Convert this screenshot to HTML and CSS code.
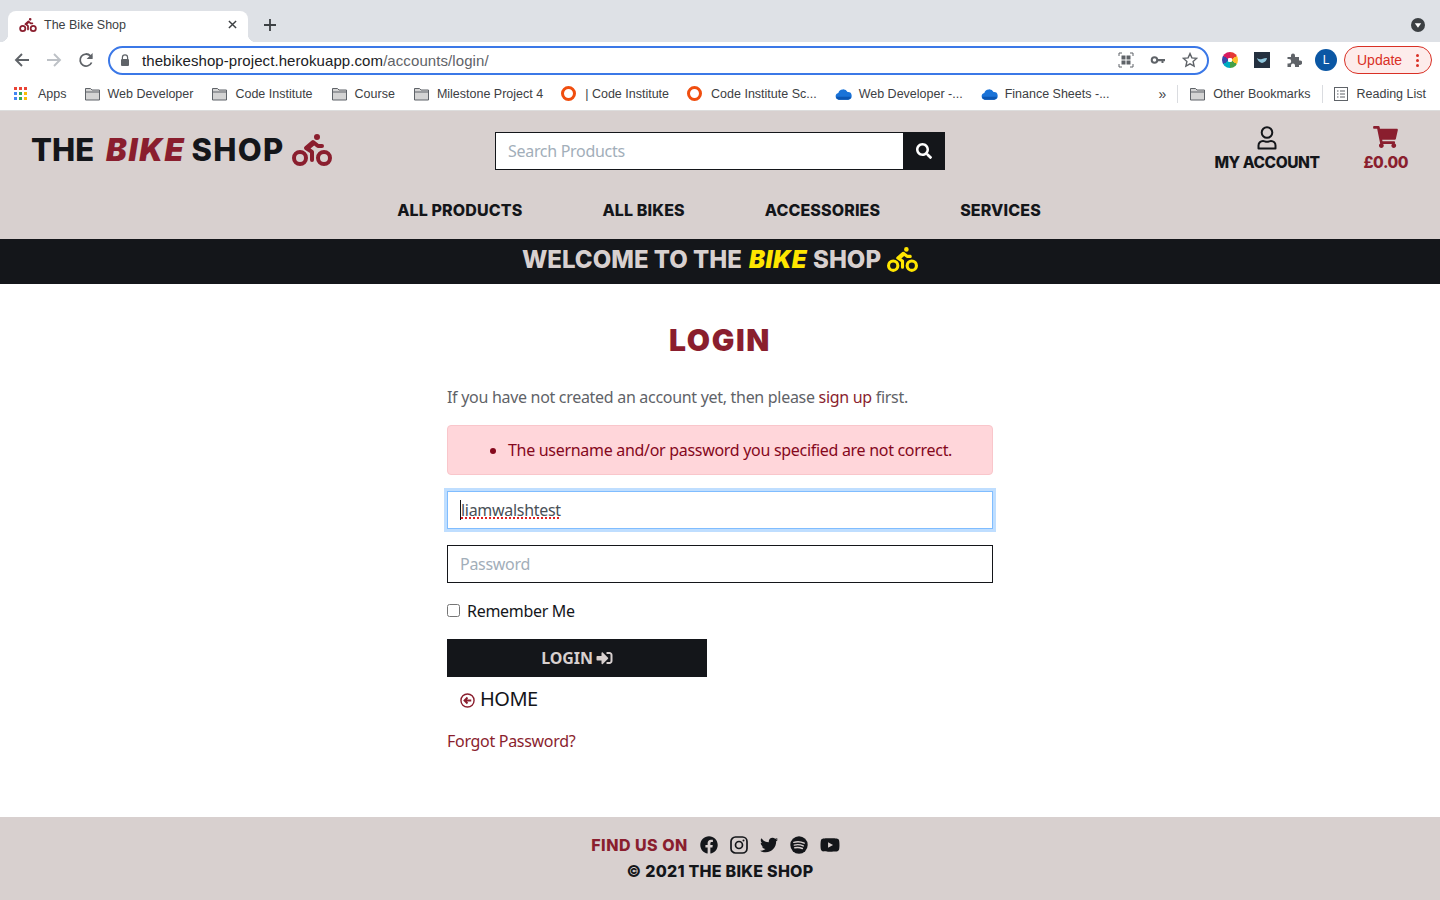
FILE: index.html
```html
<!DOCTYPE html>
<html lang="en">
<head>
<meta charset="utf-8">
<title>The Bike Shop</title>
<link rel="stylesheet" href="styles.css">
</head>
<body>
<svg class="defs" aria-hidden="true">
  <symbol id="bike" viewBox="0 0 640 512"><path d="M400 96a48 48 0 1 0-48-48 48 48 0 0 0 48 48zm-4 121a31.9 31.9 0 0 0 20 7h64a32 32 0 0 0 0-64h-52.78L356 103a31.94 31.94 0 0 0-40.81.68l-112 96a32 32 0 0 0 3.08 50.92L288 305.12V416a32 32 0 0 0 64 0V288a32 32 0 0 0-14.25-26.62l-41.36-27.57 58.25-49.92zm116 39a128 128 0 1 0 128 128 128 128 0 0 0-128-128zm0 192a64 64 0 1 1 64-64 64 64 0 0 1-64 64zM128 256a128 128 0 1 0 128 128 128 128 0 0 0-128-128zm0 192a64 64 0 1 1 64-64 64 64 0 0 1-64 64z"/></symbol>
  <symbol id="folder" viewBox="0 0 16 14"><path d="M1 3V1.500h5L7.500 3H15v10H1zM1 5h14" fill="#d4d4d4" stroke="#5f6368" stroke-width="1"/></symbol>
  <symbol id="cloud" viewBox="0 0 18 12"><path d="M4 12a3.600 3.600 0 0 1-.5-7.100A5.300 5.300 0 0 1 13.300 4 4 4 0 0 1 14 12z" fill="#1a73d8"/><path d="M1 9h16v0a3.500 3.500 0 0 1-3 3H4a3.500 3.500 0 0 1-3-3z" fill="#0b56b3"/></symbol>
</svg>

<div class="browser">
  <div class="tabstrip">
    <div class="tab">
      <svg class="fav" fill="#8a1e2e"><use href="#bike"/></svg>
      <span class="tab-title">The Bike Shop</span>
      <svg class="tab-x" viewBox="0 0 10 10"><path d="M1 1l8 8M9 1L1 9" stroke="#3c4043" stroke-width="1.600"/></svg>
    </div>
    <svg class="new-tab" viewBox="0 0 12 12"><path d="M6 0v12M0 6h12" stroke="#3c4043" stroke-width="1.800"/></svg>
    <svg class="tab-menu" viewBox="0 0 14 14"><circle cx="7" cy="7" r="7" fill="#3c4043"/><path d="M3.800 5.300h6.400L7 9.800z" fill="#fff"/></svg>
  </div>
  <div class="toolbar">
    <svg class="nav-ic" viewBox="0 0 16 16"><path d="M15 8H2M8 2L2 8l6 6" fill="none" stroke="#5f6368" stroke-width="1.900"/></svg>
    <svg class="nav-ic" viewBox="0 0 16 16"><path d="M1 8h13M8 2l6 6-6 6" fill="none" stroke="#bdc1c6" stroke-width="1.900"/></svg>
    <svg class="nav-ic" viewBox="0 0 16 16"><path d="M13.600 10.500A6 6 0 1 1 12.400 3.800L14 5.500" fill="none" stroke="#5f6368" stroke-width="1.800"/><path d="M14.600 1v6h-6z" fill="#5f6368"/></svg>
    <div class="omnibox">
      <svg class="lock" viewBox="0 0 10 12"><path d="M2.400 5V3.400a2.600 2.600 0 0 1 5.200 0V5" fill="none" stroke="#5f6368" stroke-width="1.200"/><rect x="1" y="5" width="8" height="7" rx="1" fill="#5f6368"/></svg>
      <span class="url"><b>thebikeshop-project.herokuapp.com</b>/accounts/login/</span>
      <svg class="omni-ic" viewBox="0 0 16 16"><path d="M1 4V1h3M12 1h3v3M15 12v3h-3M4 15H1v-3" fill="none" stroke="#5f6368"/><rect x="3.500" y="3.500" width="4" height="4" fill="#5f6368"/><rect x="8.500" y="3.500" width="4" height="4" fill="#5f6368"/><rect x="3.500" y="8.500" width="4" height="4" fill="#5f6368"/><rect x="8.500" y="8.500" width="4" height="4" fill="#5f6368"/></svg>
      <svg class="omni-ic" viewBox="0 0 16 16"><circle cx="4.500" cy="8" r="2.800" fill="none" stroke="#5f6368" stroke-width="2"/><path d="M7 7h8v2.200h-1.500V11h-2V9.200H7z" fill="#5f6368"/></svg>
      <svg class="omni-ic" viewBox="0 0 16 16"><path d="M8 1.600l1.900 4.300 4.700.5-3.500 3.100 1 4.600L8 11.800l-4.100 2.300 1-4.600L1.400 6.400l4.700-.5z" fill="none" stroke="#5f6368" stroke-width="1.400"/></svg>
    </div>
    <div class="tool-right">
      <span class="wheel"></span>
      <svg class="ext" viewBox="0 0 16 16"><rect width="16" height="16" fill="#24303f"/><path d="M3 6q2.500 2 5 1t5-1q-.5 4-5 5-4-1-5-5z" fill="#8fc6dc"/></svg>
      <svg class="ext" viewBox="0 0 16 16"><path d="M1.500 5H5V3.500a2 2 0 0 1 4 0V5h4v3.500h1a2.200 2.200 0 0 1 0 4.400h-1V15H9v-1.500a2 2 0 0 0-4 0V15H1.500v-3.500H3a2.200 2.200 0 0 0 0-4.400H1.500z" fill="#5f6368"/></svg>
      <span class="avatar">L</span>
      <span class="update">Update<span class="dots"><i></i><i></i><i></i></span></span>
    </div>
  </div>
  <div class="bookmarks">
    <span class="bm bm-apps"><span class="apps-grid"><i class="r"></i><i class="r"></i><i class="r"></i><i class="b"></i><i class="g"></i><i class="y"></i><i class="b"></i><i class="g"></i><i class="y"></i></span>Apps</span>
    <span class="bm"><svg class="bm-ic"><use href="#folder"/></svg>Web Developer</span>
    <span class="bm"><svg class="bm-ic"><use href="#folder"/></svg>Code Institute</span>
    <span class="bm"><svg class="bm-ic"><use href="#folder"/></svg>Course</span>
    <span class="bm"><svg class="bm-ic"><use href="#folder"/></svg>Milestone Project 4</span>
    <span class="bm"><span class="ring"></span>| Code Institute</span>
    <span class="bm"><span class="ring"></span>Code Institute Sc...</span>
    <span class="bm"><svg class="bm-ic"><use href="#cloud"/></svg>Web Developer -...</span>
    <span class="bm"><svg class="bm-ic"><use href="#cloud"/></svg>Finance Sheets -...</span>
    <span class="bm-right">
      <span class="more">»</span>
      <span class="sep"></span>
      <span class="bm"><svg class="bm-ic"><use href="#folder"/></svg>Other Bookmarks</span>
      <span class="sep"></span>
      <span class="bm"><svg class="bm-list" viewBox="0 0 14 14"><rect x=".5" y=".5" width="13" height="13" fill="none" stroke="#5f6368"/><path d="M3 4h1.500M6 4h5M3 7h1.500M6 7h5M3 10h1.500M6 10h5" stroke="#5f6368"/></svg>Reading List</span>
    </span>
  </div>
</div>

<div class="site">
  <header class="site-header">
    <div class="head-row">
      <a class="logo"><span class="logo-the">THE</span><em>BIKE</em><span class="logo-shop">SHOP</span><svg class="logo-bike"><use href="#bike"/></svg></a>
      <form class="search">
        <input class="search-input" type="text" placeholder="Search Products">
        <button class="search-btn" type="button"><svg viewBox="0 0 512 512"><path d="M505 442.700L405.300 343c-4.500-4.500-10.600-7-17-7H372c27.600-35.300 44-79.700 44-128C416 93.100 322.900 0 208 0S0 93.100 0 208s93.100 208 208 208c48.300 0 92.700-16.400 128-44v16.300c0 6.400 2.500 12.500 7 17l99.700 99.700c9.400 9.400 24.600 9.400 33.900 0l28.300-28.300c9.400-9.400 9.400-24.600.1-34zM208 336c-70.700 0-128-57.200-128-128 0-70.700 57.200-128 128-128 70.700 0 128 57.200 128 128 0 70.700-57.200 128-128 128z"/></svg></button>
      </form>
      <div class="head-links">
        <a class="head-link">
          <svg class="user-ic" viewBox="0 0 20 24"><circle cx="10" cy="6.500" r="5.300" fill="none" stroke="#14161a" stroke-width="2"/><path d="M1.500 22.500v-3a4.500 4.500 0 0 1 4.500-4.500c1.500 0 2 .8 4 .8s2.500-.8 4-.8a4.500 4.500 0 0 1 4.500 4.500v3z" fill="none" stroke="#14161a" stroke-width="2" stroke-linejoin="round"/></svg>
          <span>MY ACCOUNT</span>
        </a>
        <a class="head-link cart">
          <svg class="cart-ic" viewBox="0 0 576 512"><path d="M528.120 301.319l47.273-208C578.806 78.301 567.391 64 551.990 64H159.208l-9.166-44.810C147.758 8.021 137.930 0 126.529 0H24C10.745 0 0 10.745 0 24v16c0 13.255 10.745 24 24 24h69.883l70.248 343.435C147.325 417.100 136 435.222 136 456c0 30.928 25.072 56 56 56s56-25.072 56-56c0-15.674-6.447-29.835-16.824-40h209.647C430.447 426.165 424 440.326 424 456c0 30.928 25.072 56 56 56s56-25.072 56-56c0-22.172-12.888-41.332-31.579-50.405l5.517-24.276c3.413-15.018-8.002-29.319-23.403-29.319H218.117l-6.545-32h293.145c11.206 0 20.920-7.754 23.403-18.681z"/></svg>
          <span>£0.00</span>
        </a>
      </div>
    </div>
    <nav class="main-nav">
      <a>ALL PRODUCTS</a>
      <a>ALL BIKES</a>
      <a>ACCESSORIES</a>
      <a>SERVICES</a>
    </nav>
    <div class="banner"><span class="ban-lead">WELCOME TO THE</span><em>BIKE</em><span class="ban-shop">SHOP</span><svg class="banner-bike"><use href="#bike"/></svg></div>
  </header>

  <main class="main">
    <div class="login">
      <h1 class="login-title">LOGIN</h1>
      <p class="intro">If you have not created an account yet, then please <a>sign up</a> first.</p>
      <div class="alert"><ul><li>The username and/or password you specified are not correct.</li></ul></div>
      <div class="field field-focus"><span class="typed">liamwalshtest</span></div>
      <input class="field field-pass" type="password" placeholder="Password">
      <label class="remember"><input type="checkbox"><span>Remember Me</span></label>
      <button class="login-btn" type="button">LOGIN <svg viewBox="0 0 512 512"><path d="M416 448h-84c-6.600 0-12-5.400-12-12v-40c0-6.600 5.400-12 12-12h84c17.700 0 32-14.300 32-32V160c0-17.700-14.300-32-32-32h-84c-6.600 0-12-5.400-12-12V76c0-6.600 5.400-12 12-12h84c53 0 96 43 96 96v192c0 53-43 96-96 96zm-47-201L201 79c-15-15-41-4.500-41 17v96H24c-13.300 0-24 10.700-24 24v96c0 13.300 10.700 24 24 24h136v96c0 21.500 26 32 41 17l168-168c9.300-9.400 9.300-24.600 0-34z"/></svg></button>
      <a class="home"><svg viewBox="0 0 16 16"><circle cx="8" cy="8" r="7" fill="none" stroke="#8a1e2e" stroke-width="1.500"/><path d="M12 8H5.500M8 4.800L4.800 8 8 11.200" fill="none" stroke="#8a1e2e" stroke-width="2"/></svg>HOME</a>
      <a class="forgot">Forgot Password?</a>
    </div>
  </main>

  <footer class="footer">
    <div class="find">
      <span class="find-label">FIND US ON</span>
      <svg class="soc" viewBox="0 0 512 512"><path d="M504 256C504 119 393 8 256 8S8 119 8 256c0 123.780 90.690 226.380 209.250 245V327.690h-63V256h63v-54.640c0-62.150 37-96.480 93.670-96.480 27.140 0 55.520 4.840 55.520 4.840v61h-31.280c-30.800 0-40.410 19.120-40.410 38.730V256h68.780l-11 71.690h-57.780V501C413.310 482.380 504 379.780 504 256z"/></svg>
      <svg class="soc" viewBox="0 0 18 18"><rect x="1" y="1" width="16" height="16" rx="4.500" fill="none" stroke="#14161a" stroke-width="1.700"/><circle cx="9" cy="9" r="3.500" fill="none" stroke="#14161a" stroke-width="1.700"/><circle cx="13.500" cy="4.500" r="1" fill="#14161a"/></svg>
      <svg class="soc" viewBox="0 0 512 512"><path d="M459.370 151.716c.325 4.548.325 9.097.325 13.645 0 138.720-105.583 298.558-298.558 298.558-59.452 0-114.680-17.219-161.137-47.106 8.447.974 16.568 1.299 25.340 1.299 49.055 0 94.213-16.568 130.274-44.832-46.132-.975-84.792-31.188-98.112-72.772 6.498.974 12.995 1.624 19.818 1.624 9.421 0 18.843-1.300 27.614-3.573-48.081-9.747-84.143-51.980-84.143-102.985v-1.299c13.969 7.797 30.214 12.670 47.431 13.319-28.264-18.843-46.781-51.005-46.781-87.391 0-19.492 5.197-37.360 14.294-52.954 51.655 63.675 129.300 105.258 216.365 109.807-1.624-7.797-2.599-15.918-2.599-24.040 0-57.828 46.782-104.934 104.934-104.934 30.213 0 57.502 12.670 76.670 33.137 23.715-4.548 46.456-13.320 66.599-25.340-7.798 24.366-24.366 44.833-46.132 57.827 21.117-2.273 41.584-8.122 60.426-16.243-14.292 20.791-32.161 39.308-52.628 54.253z"/></svg>
      <svg class="soc" viewBox="0 0 18 18"><circle cx="9" cy="9" r="8.700" fill="#14161a"/><path d="M3.800 6.300q5.500-1.600 10.400.9M4.300 9.100q4.600-1.200 9 .8M4.800 11.800q3.800-1 7.600.7" fill="none" stroke="#d8d0cf" stroke-width="1.400" stroke-linecap="round"/></svg>
      <svg class="soc soc-yt" viewBox="0 0 576 512"><path d="M549.655 124.083c-6.281-23.650-24.787-42.276-48.284-48.597C458.781 64 288 64 288 64S117.220 64 74.629 75.486c-23.497 6.322-42.003 24.947-48.284 48.597-11.412 42.867-11.412 132.305-11.412 132.305s0 89.438 11.412 132.305c6.281 23.650 24.787 41.500 48.284 47.821C117.220 448 288 448 288 448s170.780 0 213.371-11.486c23.497-6.321 42.003-24.171 48.284-47.821 11.412-42.867 11.412-132.305 11.412-132.305s0-89.438-11.412-132.305zm-317.510 213.508V175.185l142.739 81.205-142.739 81.201z"/></svg>
    </div>
    <div class="copy">© 2021 THE BIKE SHOP</div>
  </footer>
</div>
</body>
</html>
```

FILE: styles.css
```css
* { box-sizing: border-box; }
html, body { height: 100%; }
body {
  margin: 0;
  height: 900px;
  overflow: hidden;
  display: flex;
  flex-direction: column;
  font-family: "Noto Sans", sans-serif;
  color: #14161a;
  background: #fff;
}
.defs { width: 0; height: 0; display: block; }
a { color: inherit; text-decoration: none; }

/* Browser chrome */
.browser { font-family: "Liberation Sans", sans-serif; flex: none; }
.tabstrip {
  height: 42px;
  background: #dee1e6;
  display: flex;
  align-items: flex-end;
  padding-left: 8px;
}
.tab {
  position: relative;
  width: 240px;
  height: 31px;
  background: #fff;
  border-radius: 8px 8px 0 0;
  display: flex;
  align-items: center;
  padding: 0 11px 4px 11px;
  font-size: 12.500px;
  color: #3c4043;
}
.tab::before, .tab::after {
  content: "";
  position: absolute;
  bottom: 0;
  width: 8px;
  height: 8px;
}
.tab::before { right: 100%; background: radial-gradient(circle at 0 0, transparent 8px, #fff 8.500px); }
.tab::after { left: 100%; background: radial-gradient(circle at 100% 0, transparent 8px, #fff 8.500px); }
.fav { width: 18px; height: 14px; margin-right: 7px; }
.tab-title { flex: 1; }
.tab-x { width: 9px; height: 9px; }
.new-tab { width: 12px; height: 12px; margin: 0 0 11px 16px; }
.tab-menu { width: 14px; height: 14px; margin: 0 15px 10px auto; }

.toolbar {
  height: 42px;
  background: #fff;
  display: flex;
  align-items: center;
  padding: 0 0 6px 14px;
}
.nav-ic { width: 16px; height: 16px; margin-right: 16px; }
.omnibox {
  margin-left: -2px;
  width: 1101px;
  height: 29px;
  border: 2px solid #3b78e7;
  border-radius: 15px;
  display: flex;
  align-items: center;
  padding: 0 9px 0 10px;
  gap: 16px;
}
.lock { width: 10px; height: 12px; flex: none; }
.url { flex: 1; margin-left: -4px; font-size: 15px; color: #5f6368; letter-spacing: .08px; }
.url b { font-weight: 400; color: #202124; }
.omni-ic { width: 16px; height: 16px; flex: none; }
.tool-right { display: flex; align-items: center; margin-left: 13px; gap: 16px; }
.wheel {
  width: 16px;
  height: 16px;
  border-radius: 50%;
  background:
    radial-gradient(circle, #fff 0 2px, transparent 2.500px),
    conic-gradient(#e53935 0 60deg, #fbc02d 0 120deg, #43a047 0 180deg, #00acc1 0 240deg, #3949ab 0 300deg, #d81b60 0);
}
.ext { width: 16px; height: 16px; }
.avatar {
  width: 22px;
  height: 22px;
  margin-left: -3px;
  border-radius: 50%;
  background: #0b57a4;
  color: #fff;
  font-size: 12px;
  display: flex;
  align-items: center;
  justify-content: center;
}
.update {
  margin-left: -9px;
  width: 88px;
  height: 28px;
  border: 1px solid #d93025;
  border-radius: 14px;
  background: #fdeceb;
  color: #d93025;
  font-size: 14px;
  display: flex;
  align-items: center;
  padding-left: 12px;
}
.dots { display: flex; flex-direction: column; gap: 2px; margin-left: 14px; }
.dots i { width: 3px; height: 3px; border-radius: 50%; background: #d93025; }

.bookmarks {
  height: 26px;
  background: #fff;
  display: flex;
  align-items: center;
  padding: 0 14px 7px 14px;
  font-size: 12.500px;
  color: #3c4043;
  gap: 18px;
  white-space: nowrap;
}
.bm { display: flex; align-items: center; }
.bm-apps { margin-right: -1px; }
.bm-ic { width: 17px; height: 14px; margin-right: 7px; }
.bm-list { width: 14px; height: 14px; margin-right: 9px; }
.apps-grid {
  width: 14px;
  display: grid;
  grid-template-columns: repeat(3, 3px);
  gap: 2px;
  margin-right: 10px;
}
.apps-grid i { height: 3px; }
.apps-grid .r { background: #ea4335; }
.apps-grid .b { background: #4285f4; }
.apps-grid .g { background: #34a853; }
.apps-grid .y { background: #fbbc04; }
.ring {
  width: 15px;
  height: 15px;
  border: 3.500px solid #f04e0f;
  border-radius: 50%;
  margin-right: 9px;
}
.bm-right { margin-left: auto; display: flex; align-items: center; gap: 11px; }
.more { font-size: 14px; }
.sep { width: 1px; height: 18px; background: #dadce0; }

/* Site */
.site { flex: 1; display: flex; flex-direction: column; min-height: 0; letter-spacing: -.3px; }
.site-header { background: #d8d0cf; border-top: 1px solid #ddd; }
.head-row {
  display: grid;
  grid-template-columns: 1fr 450px 1fr;
  align-items: start;
  padding: 21px 31px 0;
  height: 81px;
}
.logo {
  font-family: Inter, sans-serif;
  font-weight: 800;
  font-size: 31px;
  line-height: 36px;
  letter-spacing: 0;
  white-space: nowrap;
  display: flex;
  align-items: center;
}
.logo em, .banner em { font-style: italic; font-weight: 900; }
.logo-the { margin-right: 12px; }
.logo em { color: #8a1e2e; letter-spacing: 1.700px; margin-right: 6px; }
.logo-shop { letter-spacing: 1.300px; margin-right: 7px; }
.logo-bike { width: 40px; height: 32px; fill: #8a1e2e; }
.search { display: flex; height: 38px; }
.search-input {
  flex: 1;
  min-width: 0;
  border: 1px solid #14161a;
  border-right: 0;
  padding: 0 12px;
  font: 16px "Noto Sans", sans-serif;
  letter-spacing: -.3px;
  background: #fff;
  outline: 0;
}
.search-input::placeholder, .field-pass::placeholder { color: #a2aeb9; opacity: 1; }
.search-btn {
  width: 42px;
  background: #14161a;
  border: 0;
  padding: 0;
  display: flex;
  align-items: center;
  justify-content: center;
}
.search-btn svg { width: 16px; height: 16px; fill: #fff; }
.head-links { display: flex; justify-content: flex-end; gap: 44px; margin-top: -6px; padding-right: 1px; }
.head-link {
  display: flex;
  flex-direction: column;
  align-items: center;
  font-family: Inter, sans-serif;
  font-weight: 800;
  font-size: 15.500px;
  letter-spacing: -.45px;
  line-height: 20px;
  gap: 3px;
}
.user-ic { width: 20px; height: 24px; }
.cart { color: #8a1e2e; }
.cart-ic { width: 25px; height: 22px; fill: #8a1e2e; margin: 0 0 2px; }
.main-nav {
  height: 47px;
  display: flex;
  justify-content: center;
  align-items: center;
  gap: 80px;
  font-family: Inter, sans-serif;
  font-weight: 800;
  font-size: 16px;
  letter-spacing: .12px;
  padding: 0 2px 12px 0;
}
.banner {
  height: 45px;
  background: #14161a;
  color: #d8d0cf;
  display: flex;
  align-items: center;
  justify-content: center;
  padding-bottom: 4px;
  font-family: Inter, sans-serif;
  font-weight: 800;
  font-size: 24px;
  letter-spacing: 0;
}
.banner em { color: #ffe600; margin: 0 6px 0 7px; letter-spacing: .5px; }
.ban-shop { margin-right: 6px; }
.banner-bike { width: 31px; height: 25px; fill: #ffe600; }

.main { flex: 1; }
.login { width: 546px; margin: 0 auto; display: flex; flex-direction: column; align-items: flex-start; }
.login-title {
  align-self: center;
  margin: 38px 0 0;
  font-family: Inter, sans-serif;
  font-weight: 900;
  font-size: 30px;
  line-height: 36px;
  letter-spacing: 1.600px;
  color: #8a1e2e;
}
.intro { margin: 27px 0 0; font-size: 16px; line-height: 24px; color: #5f6368; }
.intro a, .forgot { color: #8a1e2e; }
.alert {
  width: 100%;
  height: 50px;
  margin-top: 16px;
  background: #ffd6da;
  border: 1px solid #f9c6cb;
  border-radius: 4px;
  color: #85081c;
  display: flex;
  align-items: center;
}
.alert ul { margin: 0; padding-left: 60px; }
.field {
  width: 100%;
  height: 38px;
  padding: 0 12px;
  font: 16px "Noto Sans", sans-serif;
  letter-spacing: -.3px;
  background: #fff;
}
.field-focus {
  margin-top: 16px;
  border: 1px solid #80bdff;
  box-shadow: 0 0 0 3px #bfdeff;
  display: flex;
  align-items: center;
  color: #495057;
}
.typed {
  border-left: 1px solid #14161a;
  line-height: 20px;
  text-decoration: underline dotted #e02020 2px;
}
.field-pass { margin-top: 16px; border: 1px solid #14161a; outline: 0; }
.remember {
  margin-top: 16px;
  display: flex;
  align-items: center;
  gap: 7px;
  font-size: 16px;
  line-height: 24px;
}
.remember input { margin: 0 0 2px; width: 13px; height: 13px; }
.login-btn {
  margin-top: 16px;
  width: 260px;
  height: 38px;
  background: #14161a;
  color: #d8d0cf;
  border: 0;
  font: 700 16px "Noto Sans", sans-serif;
  letter-spacing: -.1px;
  display: flex;
  align-items: center;
  justify-content: center;
  gap: 3px;
}
.login-btn svg { width: 17px; height: 16px; fill: #d8d0cf; }
.home {
  margin: 7px 0 0 13px;
  display: flex;
  align-items: center;
  gap: 5px;
  font-size: 20px;
  letter-spacing: -.5px;
  line-height: 30px;
}
.home svg { width: 15px; height: 15px; margin-top: 2px; }
.forgot { margin-top: 15px; font-size: 16px; line-height: 24px; }

.footer { flex: none; height: 83px; background: #d8d0cf; padding-top: 17px; }
.find { display: flex; justify-content: center; align-items: center; gap: 12px; height: 22px; padding-right: 9px; }
.find-label { font-family: Inter, sans-serif; font-weight: 800; font-size: 16px; letter-spacing: .5px; color: #8a1e2e; }
.soc { width: 18px; height: 18px; fill: #14161a; }
.soc-yt { width: 20px; }
.copy { margin-top: 5px; text-align: center; font-family: Inter, sans-serif; font-weight: 800; font-size: 16px; letter-spacing: .25px; line-height: 20px; }
```
